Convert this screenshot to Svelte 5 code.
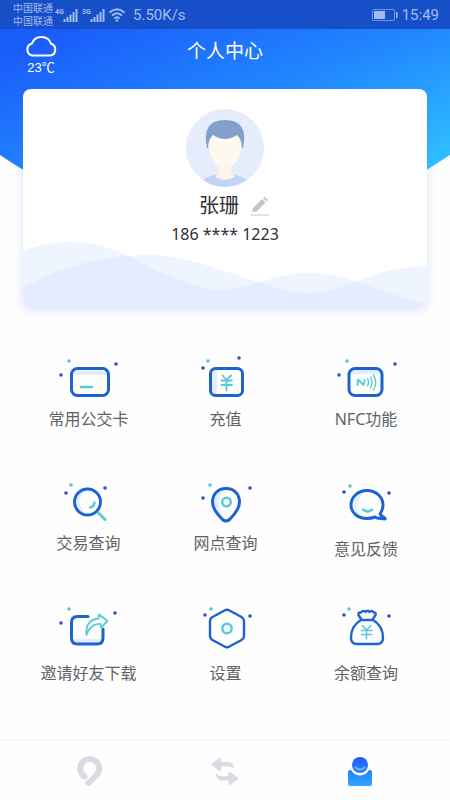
<script lang="ts">
  type Action = { id: string; label: string; dots: [number, number][] };

  // first dot of each set is the teal one
  const actions: Action[] = [
    { id: "card", label: "常用公交卡", dots: [[20, 8], [12, 22], [67, 11]] },
    { id: "recharge", label: "充值", dots: [[22, 8], [17, 15], [53, 5]] },
    { id: "nfc", label: "NFC功能", dots: [[21, 8], [13, 22], [69, 11]] },
    { id: "search", label: "交易查询", dots: [[22, 8], [17, 16], [56, 11]] },
    { id: "pin", label: "网点查询", dots: [[24, 8], [17, 21], [64, 11]] },
    { id: "feedback", label: "意见反馈", dots: [[24, 9], [18, 15], [63, 16]] },
    { id: "share", label: "邀请好友下载", dots: [[20, 2], [12, 16], [66, 6]] },
    { id: "settings", label: "设置", dots: [[25, 2], [19, 8], [64, 9]] },
    { id: "balance", label: "余额查询", dots: [[23, 2], [18, 8], [63, 9]] },
  ];

  const tabs = [
    { id: "home", label: "首页" },
    { id: "transfer", label: "换乘" },
    { id: "profile", label: "我的" },
  ];

  let activeTab = $state("profile");
</script>

{#snippet signal(label: string)}
  <svg class="signal" viewBox="0 0 24 16" aria-hidden="true">
    <text x="0" y="7">{label}</text>
    <path d="M9.5 15v-3M12.5 15v-5M15.5 15V7.5M18.5 15V5M21.5 15V2" />
  </svg>
{/snippet}

<div class="screen">
  <div class="status-bar">
    <div class="carrier">
      <span>中国联通</span>
      <span>中国联通</span>
    </div>
    {@render signal("4G")}
    {@render signal("3G")}
    <svg class="wifi" viewBox="0 0 18 16" aria-hidden="true">
      <path d="M1.5 5.5Q9 -1 16.5 5.5M4 8.5Q9 4 14 8.5M6.5 11.5Q9 9 11.5 11.5" />
      <circle cx="9" cy="13.5" r="1.3" />
    </svg>
    <span class="speed">5.50K/s</span>
    <svg class="battery" viewBox="0 0 26 14" aria-hidden="true">
      <rect class="shell" x="0.5" y="1.5" width="22" height="11" rx="1" />
      <rect x="2" y="3" width="11" height="8" />
      <rect x="24" y="4" width="1.5" height="6" />
    </svg>
    <span class="clock">15:49</span>
  </div>

  <header class="hero">
    <svg class="backdrop" viewBox="0 0 450 200" preserveAspectRatio="none" aria-hidden="true">
      <defs>
        <linearGradient id="sky" gradientUnits="userSpaceOnUse" x1="90" y1="-10" x2="180" y2="230">
          <stop offset="0" stop-color="#1a5cfa" />
          <stop offset="0.5" stop-color="#2186ff" />
          <stop offset="1" stop-color="#2fc0ff" />
        </linearGradient>
      </defs>
      <path fill="url(#sky)" d="M0 0H450V126Q225 278 0 126Z" />
    </svg>

    <div class="title-bar">
      <div class="weather">
        <svg viewBox="0 0 34 24" aria-hidden="true">
          <path d="M8 21.5H26A6 6 0 0 0 27 9.8A10 9.5 0 0 0 8 9.5A6.200 6.200 0 0 0 8 21.5Z" />
        </svg>
        <span>23℃</span>
      </div>
      <h1>个人中心</h1>
    </div>

    <section class="profile">
      <svg class="waves" viewBox="0 0 404 64" preserveAspectRatio="none" aria-hidden="true">
        <path d="M0 9C16 2 34 0 50 0C92 0 116 23 150 35C166 41 180 48 200 48C228 47 250 31 285 31C330 31 360 54 404 61V64H0Z" />
        <path d="M0 46C35 24 84 13 127 13C164 13 200 30 239 41C254 46 266 51 282 51C324 51 350 25 395 25H404V64H0Z" />
      </svg>
      <svg class="avatar" viewBox="0 0 78 78" aria-hidden="true">
        <clipPath id="face"><circle cx="39" cy="39" r="39" /></clipPath>
        <g clip-path="url(#face)">
          <rect width="78" height="78" fill="#e5edfc" />
          <path fill="#bfd5f7" d="M13 78L17 71Q22 67 32 65H46Q56 67 61 71L65 78Z" />
          <path fill="#fff3e6" d="M33 54H45V64Q50 67 48 68Q39 74 30 68Q28 67 33 64Z" />
          <path fill="#fff8ee" d="M23 25H55V40Q54 50 47 56Q39 62 31 56Q24 50 23 40Z" />
          <path fill="#839fcb" d="M21 39Q15 11 39 11Q63 11 57 39L56 39Q56 31 51 26Q39 34 27 26Q22 31 22 39Z" />
        </g>
      </svg>
      <div class="name-row">
        <span class="name">张珊</span>
        <button class="edit" aria-label="编辑">
          <svg viewBox="0 0 18 20" aria-hidden="true">
            <path d="M1 16L2 12L11 3L14.5 6.5L5.5 15.5ZM12 2L13.5 0.5L17 4L15.5 5.5Z" />
            <path d="M0 18.5H18V19.5H0Z" />
          </svg>
        </button>
      </div>
      <p class="phone">186 **** 1223</p>
    </section>
  </header>

  <main class="actions">
    {#each actions as action (action.id)}
      <button class="action">
        <svg class="icon" class:tall={action.id === "feedback"} viewBox="0 0 80 {action.id === 'feedback' ? 53 : 47}" aria-hidden="true">
          {#each action.dots as [x, y], i}
            <circle class={i === 0 ? "dot light" : "dot"} cx={x} cy={y} r="1.8" />
          {/each}
          {#if action.id === "card"}
            <rect class="tint" x="25" y="18" width="33" height="4" />
            <rect class="line" x="22.5" y="15.5" width="37" height="27" rx="6" />
            <path class="accent bold" d="M32 34H43" />
          {:else if action.id === "recharge"}
            <rect class="tint" x="26" y="17" width="5" height="24" />
            <rect class="line" x="24.5" y="15.5" width="32" height="27" rx="5" />
            <path class="accent" d="M36.500 22.5L40.5 27L45 22.5M40.5 27V37.5M35.5 27.5H46M35.5 32H46" />
          {:else if action.id === "nfc"}
            <rect class="tint" x="25" y="17" width="29" height="4" />
            <rect class="line" x="23" y="15.5" width="33" height="27" rx="6" />
            <path class="accent" d="M31.5 32L32 26.5L37.5 32L39 27" />
            <path class="accent fine" d="M41.5 25.5Q43.5 29 41.5 33M44.5 24Q47.5 29 44.5 35M47.5 22Q52 29 47.5 37" />
          {:else if action.id === "search"}
            <path class="tint" d="M38 13A12 12 0 0 0 38 37Q23 25 38 13Z" />
            <circle class="line" cx="38.5" cy="25" r="13" />
            <path class="accent bold" d="M45.5 25.5Q45 30 41 30.5" />
            <path class="accent thick" d="M49.5 36L56 42.5" />
          {:else if action.id === "pin"}
            <path class="tint" d="M39 12Q27 15 28 25Q30 33 39 43Q27 25 39 12Z" />
            <path class="line" d="M40 11.5C31.5 11.5 26.5 17.5 26.5 25C26.5 32 32 38 36.5 42.5Q40 45.5 43.5 42.5C48 38 53.5 32 53.5 25C53.5 17.5 48.5 11.5 40 11.5Z" />
            <circle class="accent bold" cx="40.5" cy="25" r="4.3" />
          {:else if action.id === "feedback"}
            <path class="tint" d="M39 14Q27 18 27 28Q29 37 36 40Q26 27 39 14Z" />
            <path class="line" d="M54 37C56 34 57 31.5 57 28C57 20 50 13.5 41 13.5C32 13.5 25 20 25 28C25 36 32 41.5 41 41.5C44 41.5 46.5 41 49 40L51 41L59 42C60 41 55 39.5 54 37Z" />
            <path class="accent bold" d="M37 32.5Q41.5 36.5 46 32.5" />
          {:else if action.id === "share"}
            <rect class="tint" x="24" y="32" width="29" height="4" />
            <path class="line" d="M39 9.5H28.5Q22.5 9.5 22.5 15.5V31Q22.5 37 28.5 37H48Q54 37 54 31V22" />
            <path class="accent" d="M37.5 28Q36 13 49.5 11.5L50 7.5L58.5 14L52 20.5L51.5 17Q42 16 37.5 28Z" />
          {:else if action.id === "settings"}
            <path class="line slim" d="M38.5 3.5Q41 2 43.5 3.5L55.5 10Q58 11.5 58 14V29Q58 31.5 55.5 33L43.5 39.5Q41 41 38.5 39.5L26.5 33Q24 31.5 24 29V14Q24 11.5 26.5 10Z" />
            <circle class="accent bold" cx="41" cy="21.5" r="4.7" />
          {:else}
            <path class="line slim" d="M35 13C28 17 25 24 25 31Q25 37 31 37H51Q57 37 57 31C57 24 54 17 47 13Z" />
            <path class="line slim" d="M35 12L32.5 8Q32 5 35 5.5Q37 2.5 39.500 5Q41.5 2.5 43.5 5Q46 2.5 47.5 5.5Q50.5 5 49.5 8L47 12" />
            <path class="accent fine" d="M36.5 18.5L40.5 23L45 18.5M40.5 23V32M35.5 23.5H46M35.5 27.5H46" />
          {/if}
        </svg>
        <span>{action.label}</span>
      </button>
    {/each}
  </main>

  <nav class="tabs">
    {#each tabs as tab (tab.id)}
      <button
        class="tab"
        class:active={activeTab === tab.id}
        aria-label={tab.label}
        onclick={() => (activeTab = tab.id)}
      >
        <svg viewBox="0 0 36 36" aria-hidden="true">
          {#if tab.id === "home"}
            <path class="ring" d="M12.5 23.5A9.500 9.500 0 1 1 25 21.5L16.5 30" />
          {:else if tab.id === "transfer"}
            <path d="M4 11.5L12.5 5Q14 4.5 14 6V9H22Q26 9.5 27 15Q25 13.5 22 13.5H14V17Q14 18.5 12.5 18Z" />
            <path d="M32 25.5L23 32Q21.5 32.5 21.5 31V27.5H13.5Q9.5 27 8.5 20Q10.5 23 13.5 23H21.5V20Q21.5 18.5 23 19Z" />
          {:else}
            <defs>
              <linearGradient id="person" gradientUnits="userSpaceOnUse" x1="0" y1="4" x2="0" y2="33">
                <stop offset="0" stop-color="#1f5cf5" />
                <stop offset="1" stop-color="#2fa8ff" />
              </linearGradient>
            </defs>
            <path class="person" d="M8 17H9A10.200 10.200 0 0 0 27 17H28Q30 17 30 19V31Q30 33 28 33H8Q6 33 6 31V19Q6 17 8 17Z" />
            <circle class="person" cx="18" cy="12" r="8" />
            <path class="smile" d="M13.5 14.5Q18 18.5 22.5 14.5" />
          {/if}
        </svg>
      </button>
    {/each}
  </nav>
</div>

<style>
  :global(body) {
    background: #fefefe;
  }

  .screen {
    display: flex;
    flex-direction: column;
    min-height: 100vh;
    font-family: "Noto Sans", "Noto Sans CJK SC", sans-serif;
    color: #2c2f36;
  }

  button {
    padding: 0;
    border: none;
    background: none;
    font: inherit;
    color: inherit;
    cursor: pointer;
  }

  svg {
    display: block;
    overflow: visible;
  }

  .status-bar {
    display: flex;
    align-items: center;
    height: 29px;
    padding: 0 11px 0 13px;
    background: #174fc9;
    color: #a3bcf2;
    fill: #a3bcf2;
    font-family: Roboto, "Noto Sans CJK SC", sans-serif;
    font-size: 15px;
  }

  .carrier {
    display: flex;
    flex-direction: column;
    font-size: 10px;
    line-height: 13px;
  }

  .signal {
    width: 24px;
    height: 16px;
    margin-left: 2px;
  }

  .signal + .signal {
    margin-left: 3px;
  }

  .signal text {
    font-size: 7px;
    font-weight: 700;
  }

  .signal path {
    stroke: #a3bcf2;
    stroke-width: 2;
  }

  .wifi {
    width: 18px;
    height: 16px;
    margin: 0 7px 0 2px;
  }

  .wifi path {
    fill: none;
    stroke: #a3bcf2;
    stroke-width: 2;
  }

  .battery {
    width: 26px;
    height: 14px;
    margin: 0 4px 0 auto;
  }

  .battery .shell {
    fill: none;
    stroke: #6f93e6;
  }

  .hero {
    position: relative;
    padding: 0 23px;
  }

  .backdrop {
    position: absolute;
    top: 0;
    left: 0;
    width: 100%;
    height: 200px;
  }

  .title-bar {
    position: relative;
    display: grid;
    grid-template-columns: 1fr auto 1fr;
    height: 60px;
    color: #fff;
  }

  .weather {
    justify-self: start;
    display: flex;
    flex-direction: column;
    align-items: center;
    padding: 5px 1px;
    font-family: "Liberation Sans", "Noto Sans CJK SC", sans-serif;
    font-size: 13px;
    line-height: 20px;
  }

  .weather svg {
    width: 34px;
    height: 24px;
    fill: none;
    stroke: #fff;
    stroke-width: 2;
  }

  h1 {
    margin: 0;
    font-size: 19px;
    font-weight: 400;
    line-height: 44px;
  }

  .profile {
    position: relative;
    display: flex;
    flex-direction: column;
    align-items: center;
    padding: 20px 0 57px;
    border-radius: 8px;
    background: #fff;
    box-shadow: 0 4px 10px rgba(90, 120, 230, 0.22);
  }

  .waves {
    position: absolute;
    bottom: 0;
    left: 0;
    width: 100%;
    height: 64px;
    fill: rgba(195, 218, 255, 0.26);
    border-radius: 0 0 8px 8px;
    overflow: hidden;
  }

  .avatar {
    width: 78px;
    height: 78px;
  }

  .name-row {
    position: relative;
    display: flex;
    align-items: center;
    gap: 12px;
    padding: 5px 0 0 18px;
  }

  .name {
    font-size: 20px;
    line-height: 28px;
  }

  .edit svg {
    width: 18px;
    height: 20px;
    fill: #c4c5ca;
  }

  .phone {
    position: relative;
    margin: 0;
    font-size: 16px;
    line-height: 29px;
  }

  .actions {
    display: grid;
    grid-template-columns: 137fr 137fr 144fr;
    row-gap: 46px;
    padding: 47px 12px 40px 20px;
  }

  .action {
    display: flex;
    flex-direction: column;
    align-items: center;
    gap: 7px;
    font-size: 16px;
    line-height: 24px;
    color: #606266;
  }

  .icon {
    width: 80px;
    height: 47px;
    fill: none;
    stroke-linecap: round;
    stroke-linejoin: round;
  }

  .icon.tall {
    height: 53px;
  }

  .dot {
    fill: #2458b8;
  }

  .dot.light {
    fill: #62c3d3;
  }

  .tint {
    fill: #e2edff;
  }

  .line {
    stroke: #1d62d2;
    stroke-width: 3;
  }

  .line.slim {
    stroke-width: 2.4;
  }

  .accent {
    stroke: #55cbd5;
    stroke-width: 1.8;
  }

  .accent.fine {
    stroke-width: 1.4;
  }

  .accent.bold {
    stroke-width: 2.4;
  }

  .accent.thick {
    stroke-width: 3;
  }

  .tabs {
    display: grid;
    grid-template-columns: repeat(3, 1fr);
    margin-top: auto;
    padding: 12px 22px 11px;
    background: #fefefe;
    box-shadow: 0 -1px 2px #f1eff7;
  }

  .tab {
    display: flex;
    justify-content: center;
  }

  .tab svg {
    width: 36px;
    height: 36px;
    fill: #d9dae4;
  }

  .tab .ring {
    fill: none;
    stroke: #d9dae4;
    stroke-width: 6;
    stroke-linecap: round;
    stroke-linejoin: round;
  }

  .tab.active .person {
    fill: url(#person);
  }

  .smile {
    fill: none;
    stroke: #8fc0ff;
    stroke-width: 1.5;
    stroke-linecap: round;
  }
</style>
